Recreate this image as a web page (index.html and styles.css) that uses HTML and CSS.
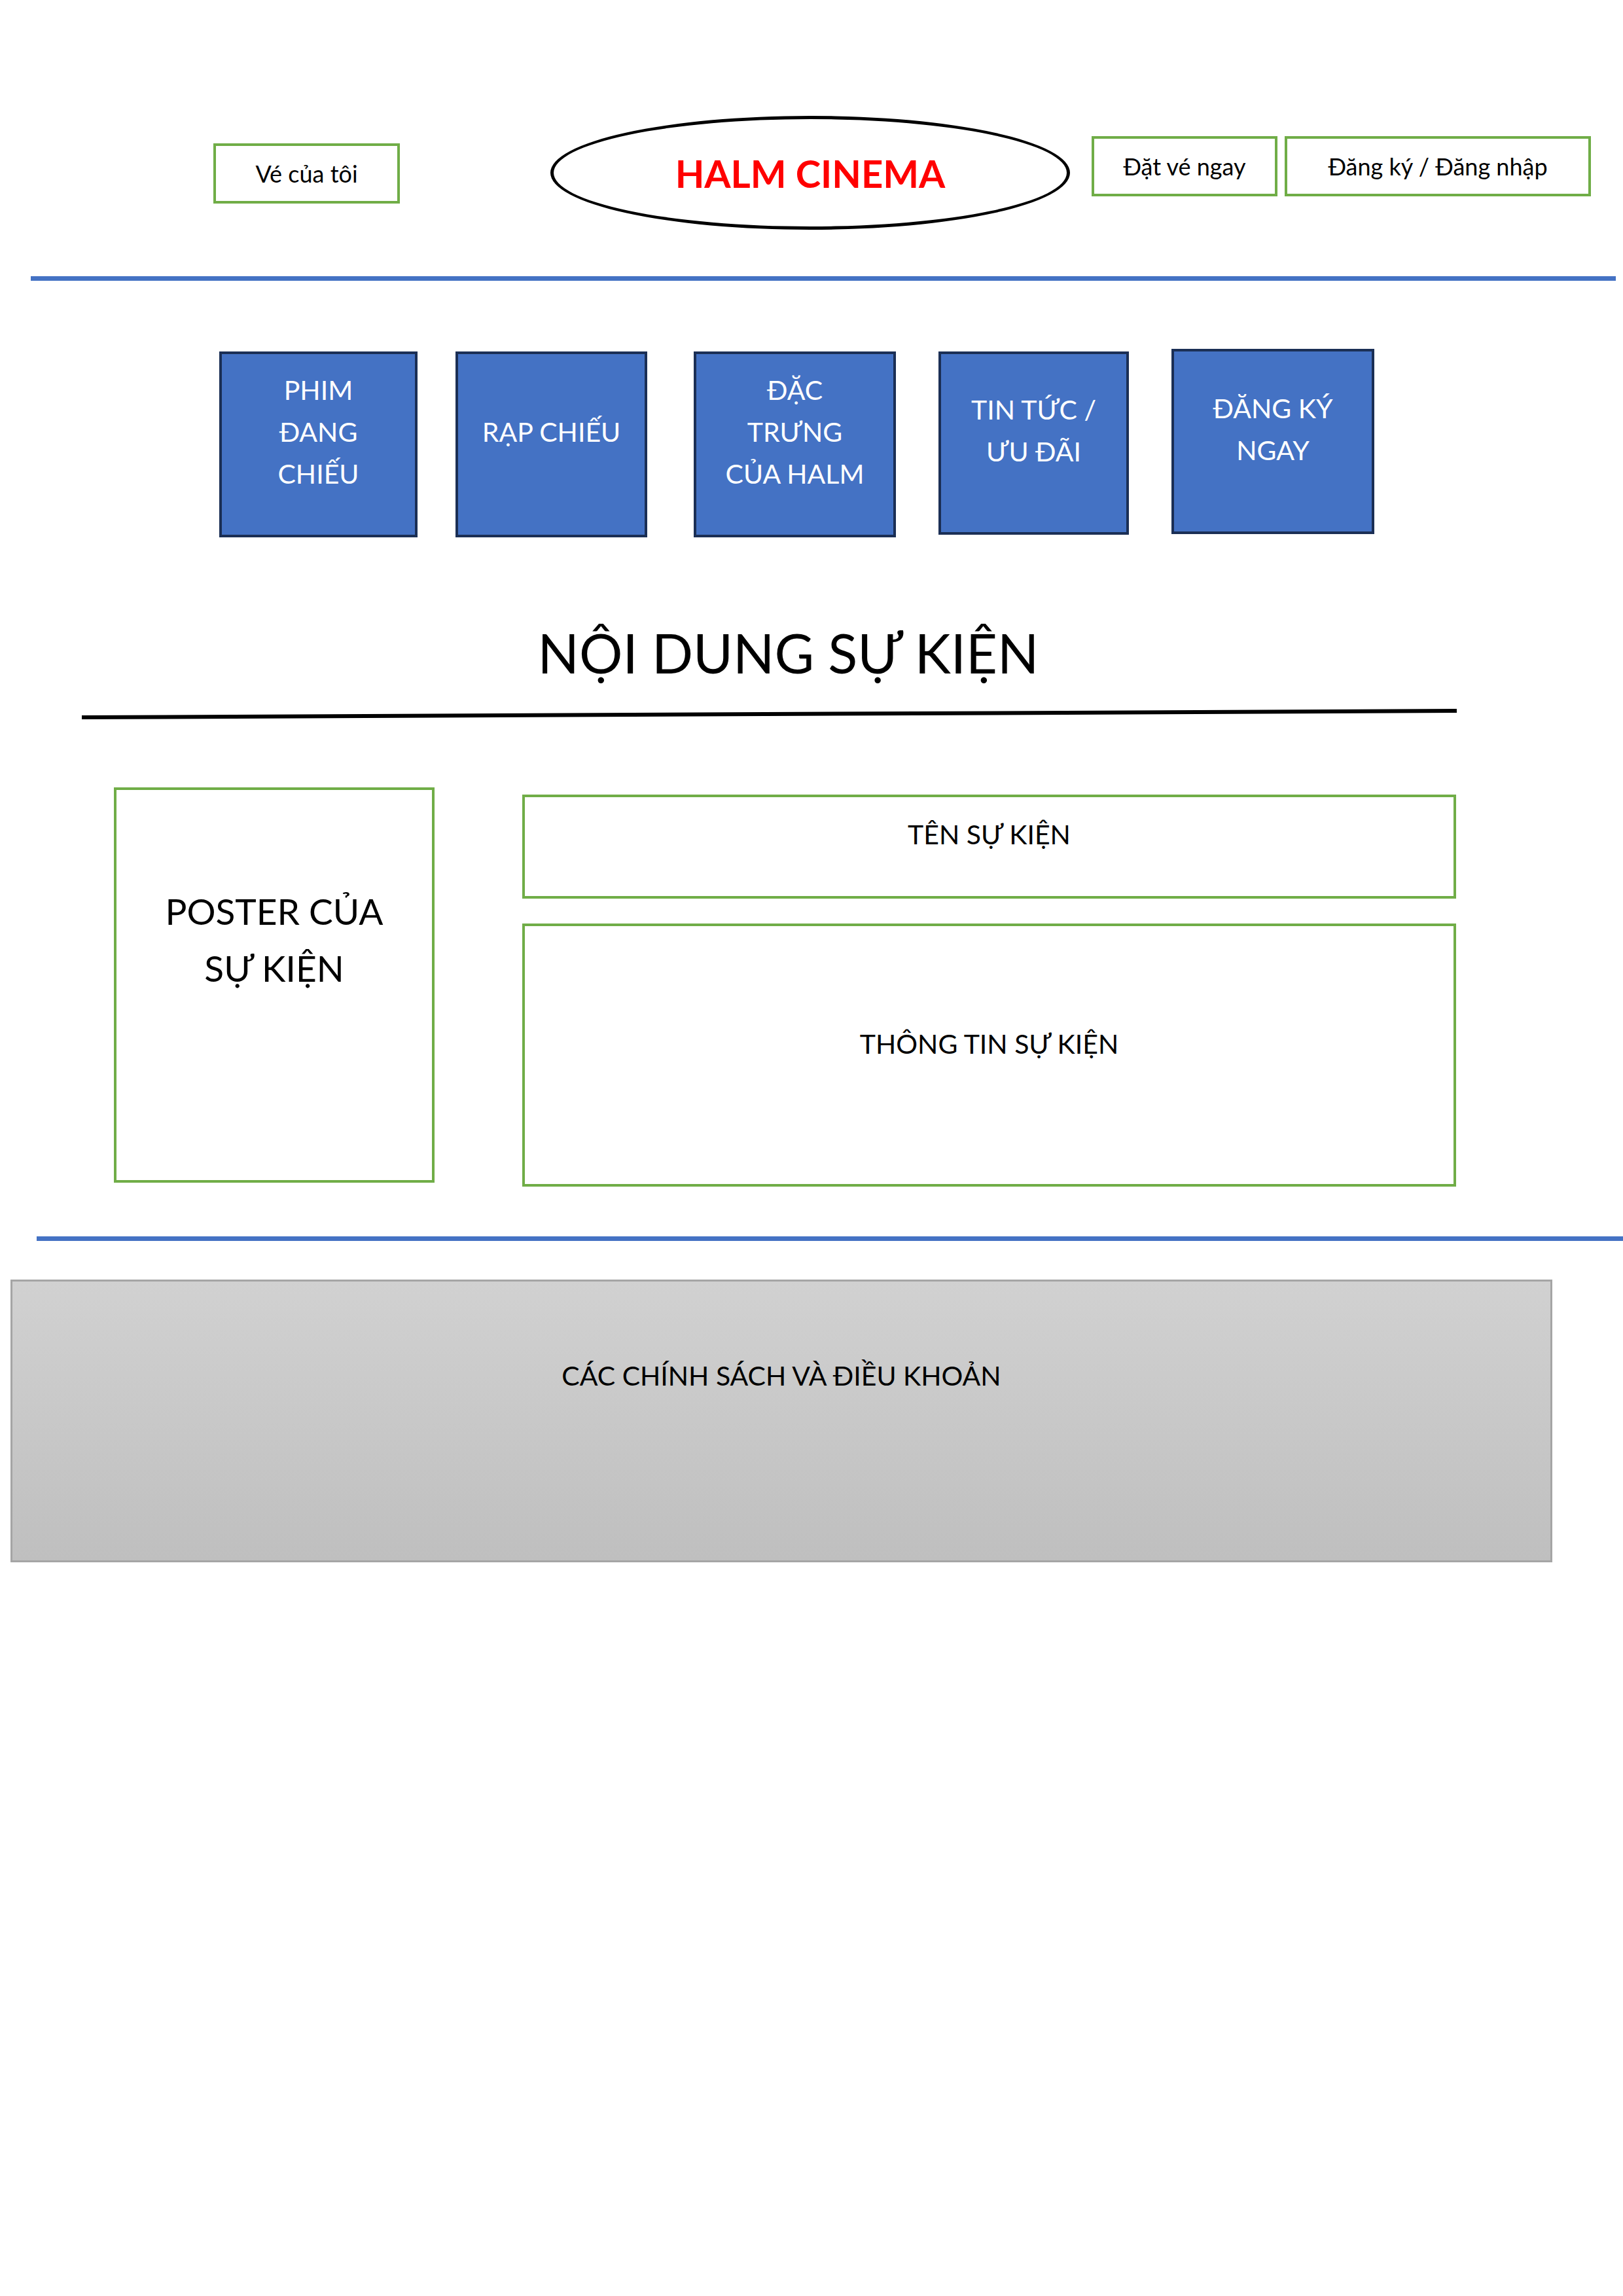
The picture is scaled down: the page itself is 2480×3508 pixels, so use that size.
FILE: index.html
```html
<!DOCTYPE html>
<html lang="vi">

<head>
    <meta charset="UTF-8">
    <meta name="viewport" content="width=device-width, initial-scale=1.0">
    <title>HALM Cinema - Sự kiện</title>
    <link rel="stylesheet" href="styles.css">
</head>

<body>

    <header class="topbar">
        <div class="outline-btn ticket-btn">Vé của tôi</div>
        <div class="logo">HALM CINEMA</div>
        <div class="actions">
            <div class="outline-btn book-btn">Đặt vé ngay</div>
            <div class="outline-btn auth-btn">Đăng ký / Đăng nhập</div>
        </div>
    </header>

    <div class="rule rule-top"></div>

    <nav class="menu">
        <div class="menu-item">PHIM<br>ĐANG<br>CHIẾU</div>
        <div class="menu-item">RẠP CHIẾU</div>
        <div class="menu-item">ĐẶC<br>TRƯNG<br>CỦA HALM</div>
        <div class="menu-item">TIN TỨC /<br>ƯU ĐÃI</div>
        <div class="menu-item">ĐĂNG KÝ<br>NGAY</div>
    </nav>

    <section class="event">
        <h1 class="event-title">NỘI DUNG SỰ KIỆN</h1>
        <div class="title-line"></div>

        <div class="event-body">
            <div class="poster">POSTER CỦA<br>SỰ KIỆN</div>
            <div class="event-info">
                <div class="event-name">TÊN SỰ KIỆN</div>
                <div class="event-desc">THÔNG TIN SỰ KIỆN</div>
            </div>
        </div>
    </section>

    <div class="rule rule-bottom"></div>

    <footer class="policy">CÁC CHÍNH SÁCH VÀ ĐIỀU KHOẢN</footer>

</body>

</html>
```

FILE: styles.css
```css
* {
    box-sizing: border-box;
}

body {
    margin: 0;
    padding: 0;
    font-family: Lato, "Open Sans", sans-serif;
    color: #000;
    background-color: #fff;
}

/* header */
.topbar {
    display: flex;
    align-items: flex-start;
    padding: 177px 0 0 326px;
}

.outline-btn {
    display: flex;
    justify-content: center;
    align-items: center;
    height: 92px;
    border: 4px solid #70ad47;
    font-size: 36px;
}

.ticket-btn {
    width: 285px;
    margin-top: 42px;
}

.logo {
    width: 794px;
    height: 174px;
    margin-left: 230px;
    border: 5px solid #000;
    border-radius: 50%;
    display: flex;
    justify-content: center;
    align-items: center;
    color: #ff0000;
    font-weight: bold;
    font-size: 58px;
}

.actions {
    display: flex;
    gap: 11px;
    margin-left: 33px;
    margin-top: 31px;
}

.book-btn {
    width: 284px;
}

.auth-btn {
    width: 468px;
}

/* blue rules */
.rule {
    height: 7px;
    background-color: #4472c4;
}

.rule-top {
    margin: 71px 11px 0 47px;
}

.rule-bottom {
    margin: 76px 0 0 56px;
}

/* menu */
.menu {
    display: flex;
    align-items: flex-start;
    margin: 108px 0 0 335px;
}

.menu-item {
    width: 303px;
    height: 284px;
    padding-bottom: 38px;
    background-color: #4472c4;
    border: 4px solid #1b2f55;
    color: #fff;
    font-size: 41px;
    line-height: 64px;
    text-align: center;
    display: flex;
    justify-content: center;
    align-items: center;
}

.menu-item:nth-child(2) {
    width: 293px;
    margin-left: 58px;
}

.menu-item:nth-child(3) {
    width: 309px;
    margin-left: 71px;
}

.menu-item:nth-child(4) {
    width: 291px;
    height: 280px;
    margin-left: 65px;
}

.menu-item:nth-child(5) {
    width: 310px;
    height: 283px;
    margin-left: 65px;
    margin-top: -4px;
}

/* event */
.event-title {
    width: 2101px;
    margin: 127px 0 0 125px;
    padding-left: 58px;
    font-size: 83px;
    font-weight: normal;
    line-height: 1.2;
    text-align: center;
}

.title-line {
    width: 2101px;
    height: 6px;
    margin: 45px 0 0 125px;
    background-color: #000;
    transform: rotate(-0.27deg);
    transform-origin: left center;
}

.event-body {
    display: flex;
    align-items: flex-start;
    margin: 104px 0 0 174px;
}

.poster {
    width: 490px;
    height: 604px;
    padding-top: 142px;
    border: 4px solid #70ad47;
    font-size: 55px;
    line-height: 87px;
    text-align: center;
}

.event-info {
    display: flex;
    flex-direction: column;
    gap: 38px;
    width: 1427px;
    margin: 11px 0 0 134px;
}

.event-name,
.event-desc {
    border: 4px solid #70ad47;
    font-size: 41px;
    text-align: center;
}

.event-name {
    height: 159px;
    padding-top: 32px;
}

.event-desc {
    height: 402px;
    padding-top: 155px;
}

/* footer */
.policy {
    width: 2356px;
    height: 432px;
    margin: 59px 0 0 16px;
    padding-top: 119px;
    border: 3px solid #a5a5a5;
    background: linear-gradient(#d1d1d1, #bfbfbf);
    font-size: 41px;
    text-align: center;
}
```
